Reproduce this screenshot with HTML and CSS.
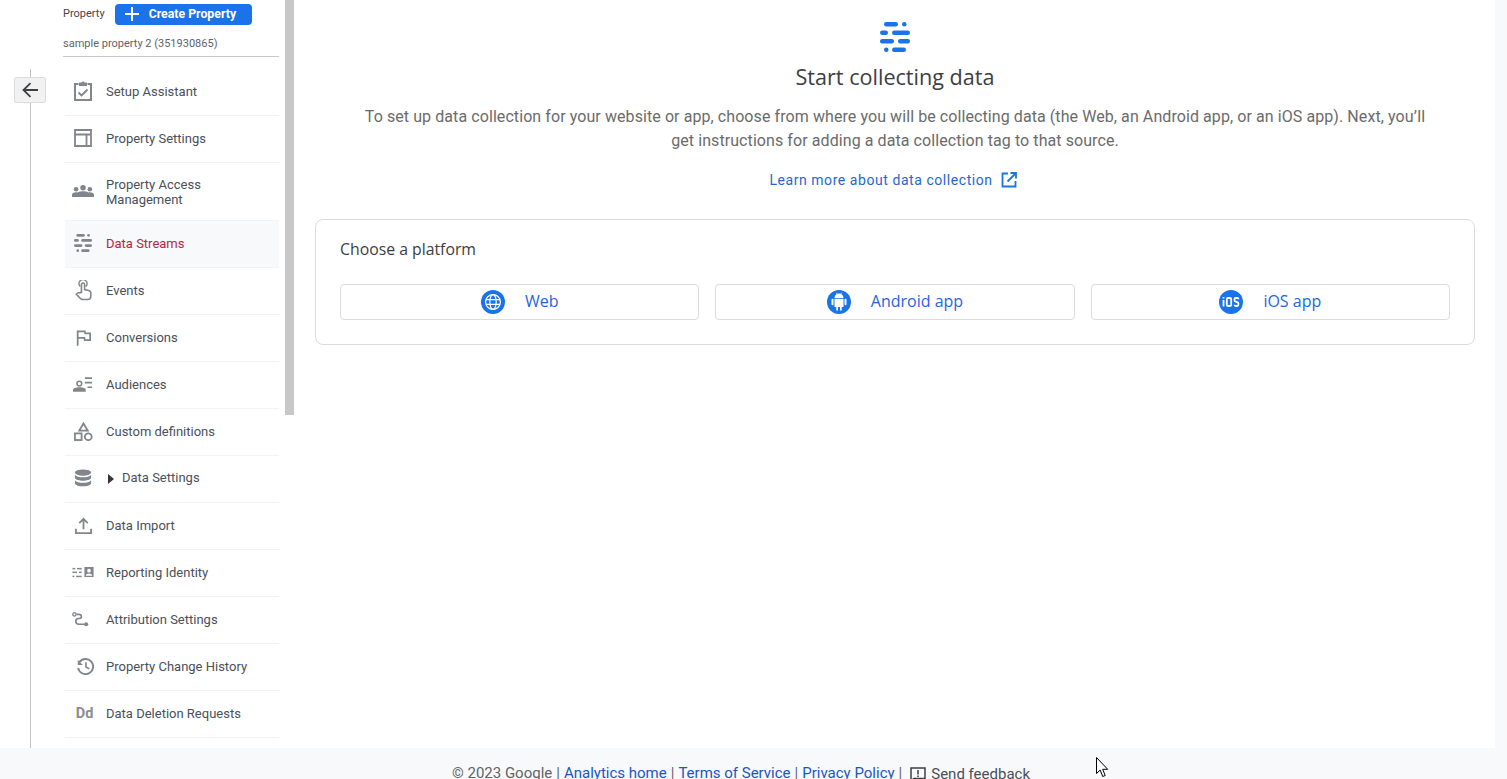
FILE: index.html
```html
<!DOCTYPE html>
<html lang="en">
<head>
<meta charset="utf-8">
<title>Data Streams</title>
<link rel="stylesheet" href="styles.css">
</head>
<body>
<div class="app">
  <aside class="sidebar">
    <div class="rail"><div class="rail-line"></div></div>
    <button class="back" aria-label="Back">
      <svg width="20" height="20" viewBox="0 0 20 20"><path d="M18 10H4M10.500 3.200L3.500 10l7 6.800" fill="none" stroke="#3c4043" stroke-width="1.800"/></svg>
    </button>
    <div class="panel">
      <div class="prop-head">
        <div class="prop-top">
          <span class="prop-label">Property</span>
          <button class="create">
            <svg width="14" height="14" viewBox="0 0 14 14"><path d="M7 0v14M0 7h14" stroke="#fff" stroke-width="2"/></svg>
            <span>Create Property</span>
          </button>
        </div>
        <div class="prop-name">sample property 2 (351930865)</div>
      </div>
      <nav class="nav">
        <a class="row">
          <span class="ico"><svg width="18" height="20" viewBox="1 0 18 20"><path d="M5.500 3H2v16h16V3h-3.500" fill="none" stroke="#80868b" stroke-width="2"/><path d="M6 1.500h2.500a1.600 1.600 0 0 1 3 0H14V5H6z" fill="#80868b"/><path d="M5.500 11.500l3 3 6-6" fill="none" stroke="#80868b" stroke-width="1.800"/></svg></span>
          <span>Setup Assistant</span>
        </a>
        <a class="row">
          <span class="ico"><svg width="18" height="18" viewBox="1 1 18 18"><path d="M2 2h16v16H2zM2 6.500h16M13.500 6.500V18" fill="none" stroke="#80868b" stroke-width="1.800"/></svg></span>
          <span>Property Settings</span>
        </a>
        <a class="row row-tall">
          <span class="ico"><svg width="22" height="15" viewBox="0 0 24 16"><circle cx="12" cy="4" r="3" fill="#80868b"/><circle cx="4.500" cy="5.500" r="2.500" fill="#80868b"/><circle cx="19.500" cy="5.500" r="2.500" fill="#80868b"/><path d="M0 14v-2.500C0 10 2 8.800 4.500 8.800c.7 0 1.200.1 1.700.2C8 8 10 7.700 12 7.700s4 .3 5.800 1.300c.5-.1 1-.2 1.700-.2C22 8.800 24 10 24 11.500V14z" fill="#80868b"/></svg></span>
          <span>Property Access<br>Management</span>
        </a>
        <a class="row row-active">
          <span class="ico"><svg width="18" height="18" viewBox="0 0 30 30"><g fill="#80868b"><rect x="4" width="14" height="4.500" rx="2.250"/><rect x="22" width="4.500" height="4.500" rx="2.250"/><rect y="8.500" width="8" height="4.500" rx="2.250"/><rect x="12" y="8.500" width="18" height="4.500" rx="2.250"/><rect y="17" width="14" height="4.500" rx="2.250"/><rect x="18" y="17" width="12" height="4.500" rx="2.250"/><rect x="4" y="25.500" width="4.500" height="4.500" rx="2.250"/><rect x="12" y="25.500" width="14" height="4.500" rx="2.250"/></g></svg></span>
          <span>Data Streams</span>
        </a>
        <a class="row">
          <span class="ico"><svg width="17" height="21" viewBox="1 0 18 22"><path d="M6.500 6.800a4.300 4.300 0 1 1 6 0" fill="none" stroke="#80868b" stroke-width="1.500"/><path d="M7.800 13V4.800a1.700 1.700 0 0 1 3.400 0V10l5 1.300c1 .3 1.500 1 1.500 2V17c0 2-1.300 3.500-3.200 3.500H9c-1 0-1.700-.4-2.300-1.100L2.500 15l1.300-1.300c.6-.5 1.200-.5 2-.2z" fill="none" stroke="#80868b" stroke-width="1.700"/></svg></span>
          <span>Events</span>
        </a>
        <a class="row">
          <span class="ico"><svg width="15" height="17" viewBox="0 0 18 20"><path d="M2 20V2.500h8.500l.5 2.500h6v8h-6.500l-.5-2.500H2" fill="none" stroke="#80868b" stroke-width="2.100"/></svg></span>
          <span>Conversions</span>
        </a>
        <a class="row">
          <span class="ico"><svg width="20" height="15" viewBox="0 0 22 16"><circle cx="7" cy="7" r="2.600" fill="none" stroke="#80868b" stroke-width="1.700"/><path d="M0 16v-2c0-2 3.500-3 7-3s7 1 7 3v2z" fill="#80868b"/><path d="M13 1h8M13 6h8M16 11h5" stroke="#80868b" stroke-width="1.800"/></svg></span>
          <span>Audiences</span>
        </a>
        <a class="row">
          <span class="ico"><svg width="19" height="19" viewBox="0 0 20 20"><path d="M10 1.500L14.500 9h-9z" fill="none" stroke="#80868b" stroke-width="1.900"/><rect x="1" y="12" width="7" height="7" fill="none" stroke="#80868b" stroke-width="1.900"/><circle cx="15" cy="15.500" r="3.600" fill="none" stroke="#80868b" stroke-width="1.900"/></svg></span>
          <span>Custom definitions</span>
        </a>
        <a class="row row-lifted">
          <span class="ico"><svg width="18" height="18" viewBox="0 0 20 20"><g fill="#80868b"><ellipse cx="10" cy="4" rx="9" ry="3.500"/><path d="M1 6.500c1.500 2 5 2.800 9 2.800s7.500-.8 9-2.800V10c-1 2-5 3-9 3s-8-1-9-3z"/><path d="M1 12.500c1.500 2 5 2.800 9 2.800s7.500-.8 9-2.800V16c-1 2-5 3.300-9 3.300S2 18 1 16z"/></g></svg></span>
          <span class="caret"></span>
          <span>Data Settings</span>
        </a>
        <a class="row">
          <span class="ico"><svg width="17" height="17" viewBox="0 0 18 18"><path d="M9 13V2M4.500 6.500L9 2l4.500 4.500M1 12.500V17h16v-4.500" fill="none" stroke="#80868b" stroke-width="1.900"/></svg></span>
          <span>Data Import</span>
        </a>
        <a class="row">
          <span class="ico"><svg width="23" height="11" viewBox="0 0 24 12"><g fill="#80868b"><rect y="1" width="3" height="1.600"/><rect x="5" y="1" width="5" height="1.600"/><rect y="5" width="5" height="1.600"/><rect x="7" y="5" width="3" height="1.600"/><rect y="9.500" width="2" height="1.600"/><rect x="4" y="9.500" width="6" height="1.600"/><path fill-rule="evenodd" d="M13 0h10v11H13zM18 2a2 2 0 1 0 0 4 2 2 0 0 0 0-4zM14.500 9.500h7c0-1.500-2-2.400-3.500-2.400s-3.500.9-3.500 2.400z"/></g></svg></span>
          <span>Reporting Identity</span>
        </a>
        <a class="row">
          <span class="ico ico-left"><svg width="17" height="15" viewBox="0 0 18 16"><circle cx="2.500" cy="2.500" r="1.800" fill="none" stroke="#80868b" stroke-width="1.300"/><circle cx="15" cy="13" r="2.200" fill="#80868b"/><path d="M4.500 2.500h2.500c2 0 3 1 3 2.300S9 7 7 7c-2.500 0-3 1.300-3 2.800 0 2 1.200 3.200 3.500 3.200H13" fill="none" stroke="#80868b" stroke-width="1.700"/></svg></span>
          <span>Attribution Settings</span>
        </a>
        <a class="row">
          <span class="ico ico-shift"><svg width="17" height="17" viewBox="0 0 18 18"><path d="M2.500 4.500A8 8 0 1 1 1.200 10.500" fill="none" stroke="#80868b" stroke-width="2"/><path d="M.8 2v5.500h5.500z" fill="#80868b"/><path d="M9.500 4.500V9.500l3.500 2" fill="none" stroke="#80868b" stroke-width="1.700"/></svg></span>
          <span>Property Change History</span>
        </a>
        <a class="row">
          <span class="ico ico-dd">Dd</span>
          <span>Data Deletion Requests</span>
        </a>
      </nav>
    </div>
  </aside>
  <div class="scrollbar"><div class="thumb"></div></div>
  <main class="content">
    <div class="hero">
      <svg class="hero-icon" width="30" height="30" viewBox="0 0 30 30"><g fill="#1a73e8"><rect x="4" width="14" height="4.500" rx="2.250"/><rect x="22" width="4.500" height="4.500" rx="2.250"/><rect y="8.500" width="8" height="4.500" rx="2.250"/><rect x="12" y="8.500" width="18" height="4.500" rx="2.250"/><rect y="17" width="14" height="4.500" rx="2.250"/><rect x="18" y="17" width="12" height="4.500" rx="2.250"/><rect x="4" y="25.500" width="4.500" height="4.500" rx="2.250"/><rect x="12" y="25.500" width="14" height="4.500" rx="2.250"/></g></svg>
      <h1 class="title">Start collecting data</h1>
      <p class="lead">To set up data collection for your website or app, choose from where you will be collecting data (the Web, an Android app, or an iOS app). Next, you’ll get instructions for adding a data collection tag to that source.</p>
      <a class="learn">
        <span>Learn more about data collection</span>
        <svg width="16" height="16" viewBox="0 0 16 16"><path d="M7 1.500H1.500v13h13V9M9.500 1h5.500v5.500M15 1L6.500 9.500" fill="none" stroke="#1a73e8" stroke-width="1.800"/></svg>
      </a>
    </div>
    <section class="card">
      <h2 class="card-title">Choose a platform</h2>
      <div class="platforms">
        <button class="platform">
          <svg width="24" height="24" viewBox="0 0 24 24"><circle cx="12" cy="12" r="12" fill="#1a73e8"/><g fill="none" stroke="#fff" stroke-width="1.200"><circle cx="12" cy="12" r="7.400"/><ellipse cx="12" cy="12" rx="3.200" ry="7.400"/><path d="M5 9.700h14M5 14.300h14"/></g></svg>
          <span>Web</span>
        </button>
        <button class="platform">
          <svg width="24" height="24" viewBox="0 0 24 24"><circle cx="12" cy="12" r="12" fill="#1a73e8"/><g fill="#fff"><path d="M7.500 8a4.500 4.500 0 0 1 9 0z"/><path d="M9.300 2.800l1 1.500M14.700 2.800l-1 1.500" stroke="#fff" stroke-width=".8"/><path d="M7.500 8.800h9V17h-1.800v3.400h-1.700V17h-2v3.400H9.300V17H7.500z"/><rect x="4.500" y="8.800" width="2" height="6.400" rx="1"/><rect x="17.500" y="8.800" width="2" height="6.400" rx="1"/></g></svg>
          <span>Android app</span>
        </button>
        <button class="platform">
          <svg width="24" height="24" viewBox="0 0 24 24"><circle cx="12" cy="12" r="12" fill="#1a73e8"/><g fill="none" stroke="#fff" stroke-width="1.800"><path d="M4.500 10v6.500M4.500 7v1.500"/><rect x="7.800" y="8" width="4.400" height="8" rx="1.200"/><path d="M19.500 9.200c0-.8-.5-1.200-1.200-1.200h-1.500c-.8 0-1.300.5-1.300 1.300v.9c0 .8.500 1.300 1.300 1.500l1.300.4c.8.200 1.300.7 1.300 1.500v1c0 .8-.5 1.400-1.300 1.400h-1.300c-.8 0-1.300-.4-1.300-1.200"/></g></svg>
          <span>iOS app</span>
        </button>
      </div>
    </section>
  </main>
  <div class="gutter"></div>
</div>
<footer class="footer">
  <span>© 2023 Google</span><span class="sep">|</span><a>Analytics home</a><span class="sep">|</span><a>Terms of Service</a><span class="sep">|</span><a>Privacy Policy</a><span class="sep">|</span>
  <span class="feedback">
    <svg width="16" height="14" viewBox="0 0 16 14"><path d="M1 1h14v10.500H4L1 13.500z" fill="none" stroke="#3c4043" stroke-width="1.500"/><path d="M8 3v4.500M8 8.500v1.500" stroke="#3c4043" stroke-width="1.500"/></svg>
    <span>Send feedback</span>
  </span>
</footer>
<svg class="cursor" width="13" height="21" viewBox="0 0 13 21"><path d="M.5.500v16l3.700-3.500 2.500 6.500 2.500-1-2.500-6.200h5z" fill="#fff" stroke="#000"/></svg>
</body>
</html>
```
FILE: styles.css
```css
* { box-sizing: border-box; }
html, body { margin: 0; height: 100%; overflow: hidden; }
body {
  position: relative;
  display: flex;
  flex-direction: column;
  height: 779px;
  background: #fff;
  font-family: Roboto, "Liberation Sans", sans-serif;
  color: #5f6368;
}
a { text-decoration: none; }
button { font-family: inherit; cursor: pointer; }

.app { display: flex; height: 748px; flex: none; }

.sidebar { position: relative; display: flex; width: 285px; flex: none; }
.rail { width: 63px; flex: none; padding-top: 69px; }
.rail-line { width: 1px; height: 100%; margin-left: 30px; background: #c4c4c4; }
.back {
  position: absolute;
  left: 14px;
  top: 77px;
  width: 32px;
  height: 26px;
  padding: 0;
  display: flex;
  align-items: center;
  justify-content: center;
  background: #f1f1f1;
  border: 1px solid #dadce0;
  border-radius: 2px;
}

.panel { width: 216px; flex: none; }
.prop-head { height: 57px; border-bottom: 1px solid #c9c9c9; padding-top: 4px; }
.prop-top { display: flex; align-items: center; height: 21px; gap: 10px; }
.prop-label { font-size: 11px; color: #4a4449; position: relative; top: -1px; }
.create {
  display: flex;
  align-items: center;
  gap: 10px;
  width: 137px;
  height: 21px;
  padding: 0 0 1px 10px;
  background: #1a73e8;
  border: 0;
  border-radius: 4px;
  color: #fff;
  font-size: 12.300px;
  font-weight: 700;
}
.prop-name { margin-top: 12px; font-size: 11px; color: #5f6368; line-height: 13px; }

.nav { padding: 12px 0 0 2px; }
.row {
  display: flex;
  align-items: center;
  height: 47px;
  padding-bottom: 2px;
  border-bottom: 1px solid #f1f3f4;
  color: #4a4f5a;
  font-size: 13px;
  line-height: 15px;
}
.row-tall { height: 58px; padding-bottom: 0; }
.row-lifted { padding-bottom: 3px; }
.row-active { background: #f8f9fa; color: #b5263f; }
.ico { width: 36px; margin-right: 5px; flex: none; display: flex; align-items: center; justify-content: center; }
.ico-shift { padding-left: 4px; }
.ico-left { padding-right: 5px; }
.ico-dd { padding-left: 3px; font-weight: 700; font-size: 14.500px; color: #8a8e92; }
.caret {
  width: 0;
  height: 0;
  margin: 2px 8px 0 2px;
  border-left: 6px solid #3c3240;
  border-top: 5px solid transparent;
  border-bottom: 5px solid transparent;
}

.scrollbar { width: 10px; flex: none; }
.thumb { width: 9px; height: 415px; background: #c8c8c8; }

.content { flex: 1; min-width: 0; padding: 22px 20px 0; }
.gutter { width: 12px; flex: none; background: #f8f9fa; }

.hero { display: flex; flex-direction: column; align-items: center; }
.hero-icon { display: block; }
.title {
  margin: 9px 0 0;
  font-family: "Open Sans", Roboto, sans-serif;
  font-size: 21.600px;
  line-height: 32px;
  font-weight: 400;
  color: #3c4043;
}
.lead {
  width: 1075px;
  margin: 12px 0 0;
  font-size: 16px;
  letter-spacing: .08px;
  line-height: 24px;
  text-align: center;
  color: #6b6b6b;
}
.learn {
  display: flex;
  align-items: center;
  gap: 8px;
  margin: 15px 4px 0 0;
  height: 24px;
  font-size: 14px;
  letter-spacing: .56px;
  color: #1f66d6;
}

.card {
  height: 126px;
  margin-top: 27px;
  padding: 17px 24px 0;
  border: 1px solid #dadce0;
  border-radius: 8px;
}
.card-title {
  margin: 0;
  font-family: "Open Sans", Roboto, sans-serif;
  font-size: 15.800px;
  line-height: 24px;
  font-weight: 400;
  color: #3c4043;
}
.platforms { display: grid; grid-template-columns: repeat(3, 1fr); gap: 16px; margin-top: 23px; }
.platform {
  display: flex;
  align-items: center;
  justify-content: center;
  gap: 20px;
  height: 36px;
  padding: 0;
  background: #fff;
  border: 1px solid #dadce0;
  border-radius: 4px;
  font-family: "Open Sans", Roboto, sans-serif;
  font-size: 16px;
  line-height: 20px;
  color: #1f66e0;
}
.platform span { position: relative; top: -1px; }

.footer {
  height: 31px;
  flex: none;
  overflow: hidden;
  display: flex;
  justify-content: center;
  padding: 16px 25px 0 0;
  background: #f8f9fa;
  font-size: 15px;
  line-height: 18px;
  color: #5f6368;
  white-space: nowrap;
}
.footer a { color: #1a56c4; }
.sep { margin: 0 4px; }
.feedback { display: inline-flex; align-items: center; gap: 5px; margin-left: 4px; color: #4a4f5a; height: 18px; position: relative; top: 1px; }

.cursor { position: absolute; left: 1096px; top: 757px; }
```
